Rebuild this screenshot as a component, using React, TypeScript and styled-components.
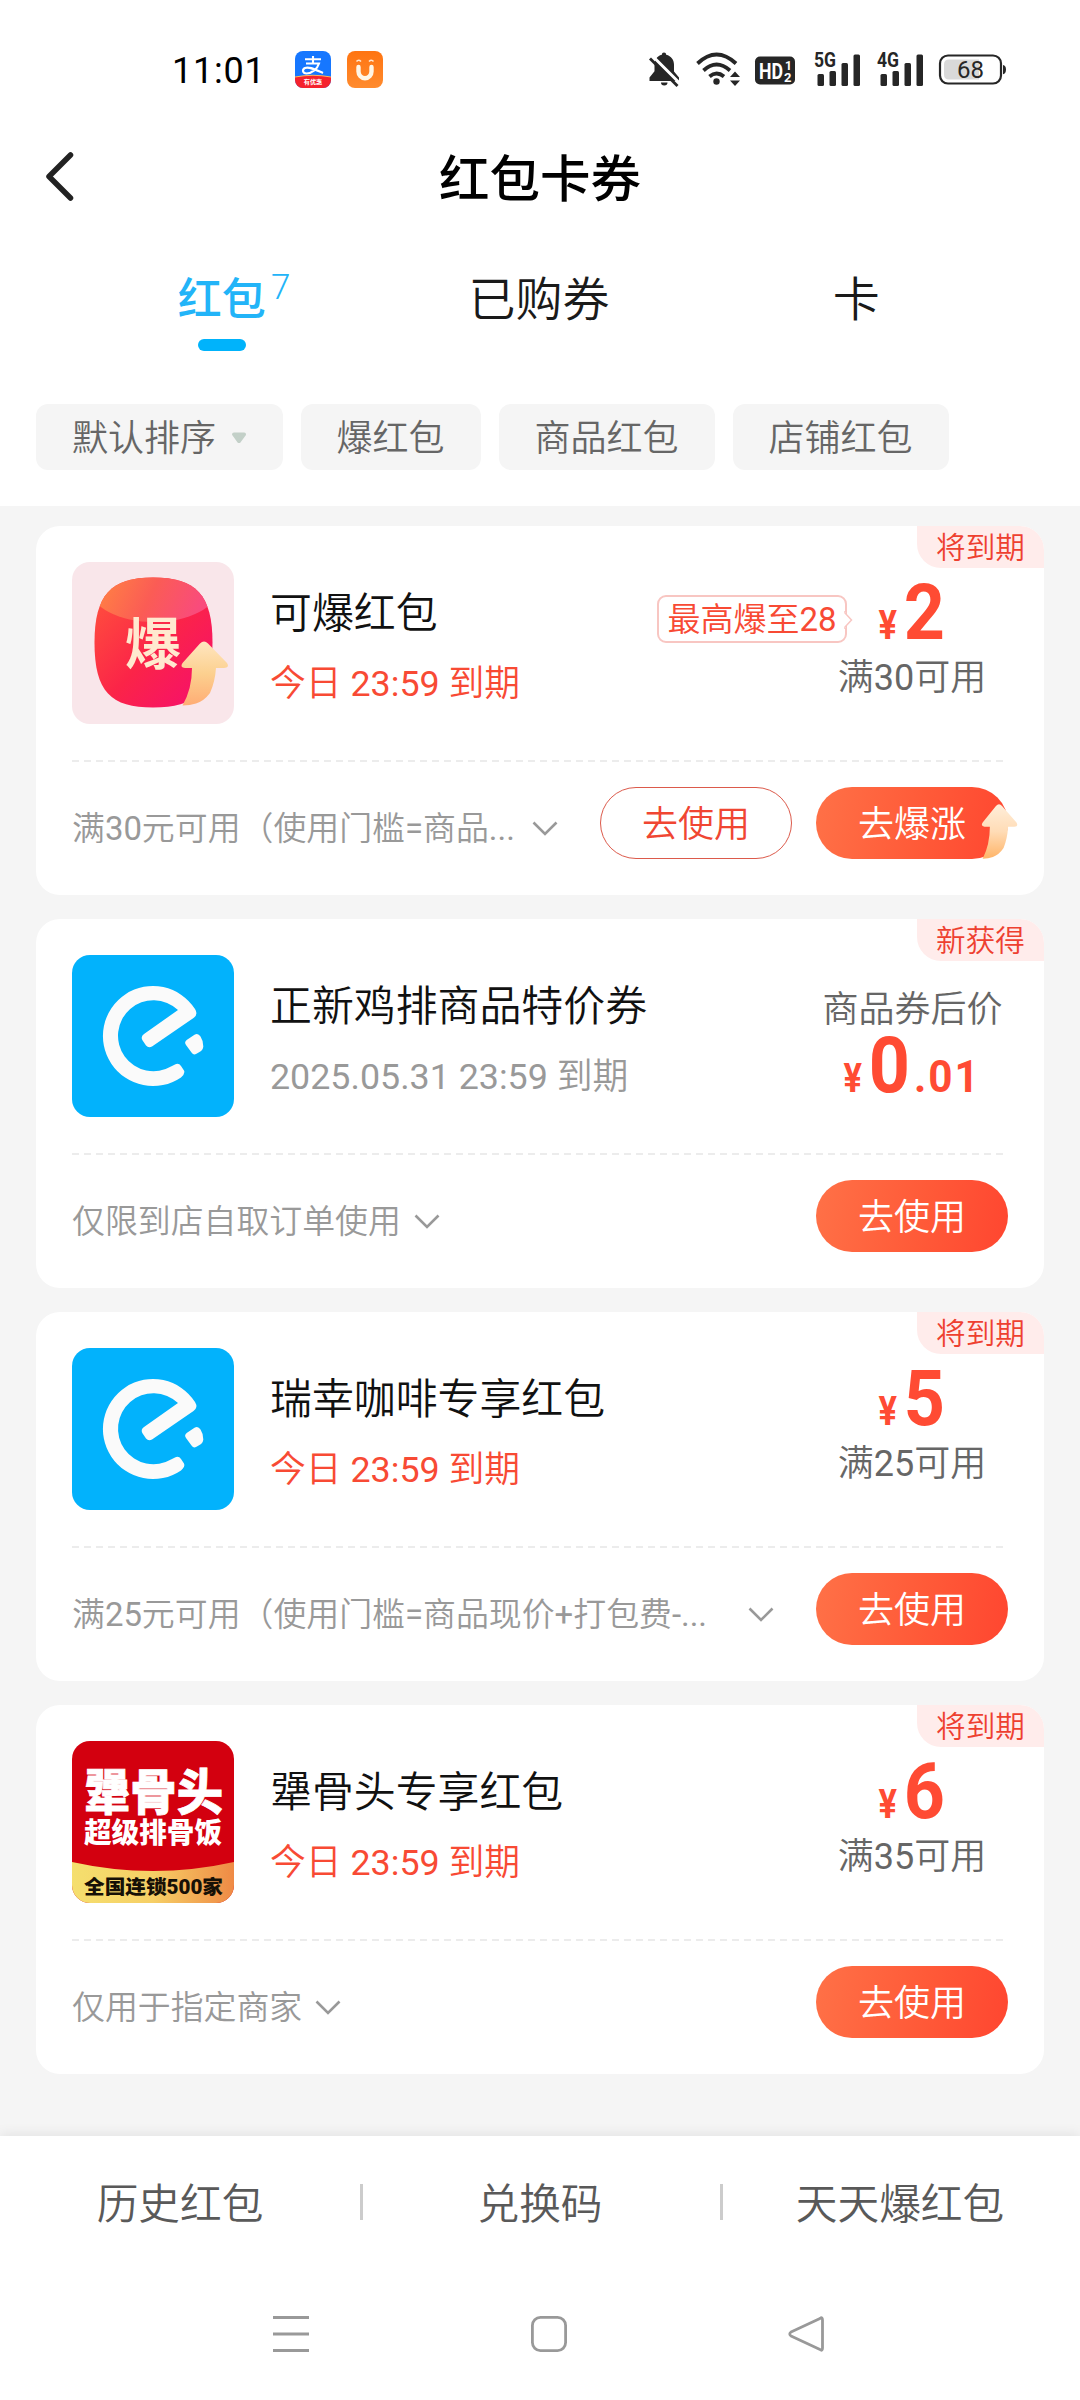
import React from "react";
import styled, { createGlobalStyle, css } from "styled-components";

const sans = `Roboto, "Noto Sans CJK SC DemiLight", "Noto Sans CJK SC", "Noto Sans", sans-serif`;
const sansStrong = `Roboto, "Noto Sans CJK SC", "Noto Sans", sans-serif`;
const red = "#f84a34";

const GlobalStyle = createGlobalStyle`
  * { box-sizing: border-box; }
  body { margin: 0; background: #f5f5f5; font-family: ${sans}; font-weight: 400; -webkit-font-smoothing: antialiased; }
  button { font: inherit; border: 0; background: none; padding: 0; margin: 0; }
`;

const Screen = styled.div`
  width: 1080px;
  height: 2400px;
  display: flex;
  flex-direction: column;
  overflow: hidden;
  background: #f5f5f5;
`;

const Top = styled.header`
  height: 506px;
  flex: none;
  background: #fff;
`;

const StatusBar = styled.div`
  height: 138px;
  padding: 0 72px 0 172px;
  display: flex;
  align-items: center;
  justify-content: space-between;
`;

const StatusGroup = styled.div`
  display: flex;
  align-items: center;
`;

const Clock = styled.span`
  font-size: 36px;
  font-weight: 400;
  letter-spacing: 0.8px;
  line-height: 44px;
  width: 123px;
  color: #000;
  padding-top: 3px;
`;

const AppIcons = styled.div`
  display: flex;
  gap: 16px;
`;

const TitleBar = styled.div`
  height: 80px;
  display: grid;
  grid-template-columns: 120px 1fr 120px;
  align-items: center;
`;

const BackButton = styled.button`
  display: flex;
  padding-left: 44px;
`;

const PageTitle = styled.h1`
  margin: 0;
  padding-top: 2px;
  text-align: center;
  font-family: ${sansStrong};
  font-size: 50.5px;
  line-height: 80px;
  font-weight: 500;
  color: #000;
`;

const Tabs = styled.nav`
  height: 186px;
  padding: 0 65px 0 63px;
  display: grid;
  grid-template-columns: repeat(3, 1fr);
`;

const Tab = styled.button<{ $active?: boolean }>`
  display: flex;
  flex-direction: column;
  align-items: center;
  padding-top: 51px;
  font-family: ${(p) => (p.$active ? sansStrong : sans)};
  font-size: ${(p) => (p.$active ? 44 : 47)}px;
  line-height: 62px;
  font-weight: ${(p) => (p.$active ? 500 : 400)};
  color: ${(p) => (p.$active ? "#22b4f8" : "#1a1a1a")};
`;

const TabLabel = styled.span`
  display: flex;
`;

const TabCount = styled.span`
  font-size: 35px;
  line-height: 37px;
  font-weight: 300;
  width: 26px;
  padding-left: 4px;
  margin-right: -26px;
`;

const TabMark = styled.span`
  width: 48px;
  height: 12px;
  border-radius: 6px;
  margin-top: 8px;
  background: #00b3fb;
`;

const Filters = styled.div`
  display: flex;
  gap: 18px;
  padding-left: 36px;
`;

const Chip = styled.button`
  display: flex;
  align-items: center;
  gap: 14.5px;
  height: 66px;
  padding: 5px 36px 0;
  border-radius: 12px;
  background: #f5f5f5;
  color: #666;
  font-size: 36px;
  line-height: 61px;
`;

const ChipCaret = styled.svg`
  margin-top: -4px;
`;

const List = styled.main`
  flex: 1;
  display: flex;
  flex-direction: column;
  gap: 24px;
  padding: 20px 36px 0;
`;

const Card = styled.article`
  position: relative;
  height: 369px;
  flex: none;
  padding: 36px;
  border-radius: 24px;
  background: #fff;
`;

const Badge = styled.span`
  position: absolute;
  top: 0;
  right: 0;
  width: 127px;
  height: 42px;
  padding-top: 1px;
  border-radius: 0 24px 0 24px;
  background: #ffeceb;
  color: #ee4030;
  font-size: 29.6px;
  line-height: 43px;
  text-align: center;
`;

const Summary = styled.div`
  display: flex;
  height: 162px;
`;

const Info = styled.div`
  flex: 1;
  padding: 22px 0 0 36px;
`;

const CouponName = styled.h2`
  margin: 0 0 16px;
  font-size: 41.9px;
  line-height: 60px;
  font-weight: 400;
  color: #111;
`;

const Expiry = styled.p<{ $urgent?: boolean }>`
  margin: 0;
  font-size: 35.8px;
  line-height: 48px;
  color: ${(p) => (p.$urgent ? red : "#999")};
`;

const Value = styled.div<{ $labelFirst?: boolean }>`
  width: 192px;
  display: flex;
  flex-direction: column;
  align-items: center;
  padding-top: ${(p) => (p.$labelFirst ? 31 : 12)}px;
`;

const Price = styled.div<{ $pull?: boolean }>`
  display: flex;
  align-items: baseline;
  height: 78px;
  line-height: 78px;
  margin-top: ${(p) => (p.$pull ? -7 : 0)}px;
  color: #ff4b33;
  font-weight: 700;
`;

const Currency = styled.span`
  font-size: 40px;
  transform: scaleX(0.86);
`;

const Amount = styled.span`
  font-size: 78px;
  margin-left: 4px;
  transform: scaleX(0.92);
`;

const Cents = styled.span`
  font-size: 45px;
  letter-spacing: 2px;
  transform: scaleX(0.94);
`;

const Terms = styled.span`
  font-size: 36px;
  line-height: 48px;
  margin-top: 2px;
  color: #666;
  white-space: nowrap;
`;

const PlainTerms = styled(Terms)`
  margin: 0 0 0 1px;
`;

const Boost = styled.span`
  position: relative;
  width: 190px;
  height: 48px;
  margin: 33px -38px 0 0;
  left: -7px;
  border: 2px solid #f8c6c2;
  border-radius: 9px;
  color: ${red};
  font-size: 33px;
  line-height: 46px;
  text-align: center;
  white-space: nowrap;
`;

const BoostTip = styled.svg`
  position: absolute;
  right: -8px;
  top: 14px;
`;

const Divider = styled.div`
  height: 2px;
  width: 931px;
  margin: 36px 0 25px;
  background: repeating-linear-gradient(90deg, #ececec 0 7px, transparent 7px 12px);
`;

const Footer = styled.div`
  display: flex;
  align-items: center;
  height: 72px;
`;

const Note = styled.button`
  flex: 1;
  display: flex;
  align-items: center;
  gap: 13px;
  padding-top: 12px;
  color: #999;
  font-size: 32.9px;
  line-height: 48px;
  white-space: nowrap;
`;

const NoteText = styled.span<{ $width?: number }>`
  ${(p) => p.$width && css`width: ${p.$width}px; text-align: left;`}
`;

const Actions = styled.div`
  display: flex;
  gap: 24px;
`;

const Action = styled.button<{ $outline?: boolean }>`
  position: relative;
  display: flex;
  justify-content: center;
  width: 192px;
  height: 72px;
  border-radius: 36px;
  font-size: 36px;
  line-height: 72px;
  padding-top: 2px;
  white-space: nowrap;
  ${(p) =>
    p.$outline
      ? css`
          border: 1.5px solid #dc5a4b;
          color: #f04632;
          line-height: 70px;
        `
      : css`
          background: linear-gradient(100deg, #ff7147 0%, #ff5a38 55%, #ff4630 100%);
          color: #fff;
        `}
`;

const ActionArrow = styled.svg`
  position: absolute;
  left: 164px;
  top: 16px;
`;

const BottomBar = styled.footer`
  height: 264px;
  flex: none;
  background: #fff;
  box-shadow: 0 -2px 12px rgba(0, 0, 0, 0.08);
`;

const Links = styled.div`
  display: grid;
  grid-template-columns: repeat(3, 1fr);
  padding-top: 36px;
`;

const LinkItem = styled.button`
  height: 60px;
  padding-top: 6px;
  font-size: 41.7px;
  line-height: 60px;
  color: #595959;
  display: flex;
  align-items: center;
  justify-content: center;
`;

const LinkCell = styled.div`
  display: grid;
  grid-template-columns: 1fr 3px;
  align-items: center;
  margin-right: -3px;
`;

const Separator = styled.i`
  width: 3px;
  height: 36px;
  background: #ccc;
`;

const NavKeys = styled.div`
  display: flex;
  justify-content: space-between;
  align-items: center;
  padding: 82px 255px 0 272px;
`;

const Alipay = () => (
  <svg width="36" height="37" viewBox="0 0 36 37">
    <defs>
      <clipPath id="ali"><rect width="36" height="37" rx="8" /></clipPath>
    </defs>
    <g clipPath="url(#ali)">
      <rect width="36" height="37" fill="#1677ff" />
      <path d="M0 26 Q18 22.5 36 26 V37 H0Z" fill="#f5222d" />
      <path d="M0 26 Q18 22.5 36 26" fill="none" stroke="#ffb35c" strokeWidth="1.2" />
      <g fill="none" stroke="#fff" strokeWidth="2.1">
        <path d="M10 8.3H26M18 5V12.3M11 12.5H24C22.5 17.5 17 22.5 11.5 22.5C7.5 22.5 6.8 18.5 10 17C14 15.2 20 18.5 28 22" />
      </g>
      <text x="18" y="33.3" textAnchor="middle" fontSize="6.2" fontWeight="700" fill="#fff" fontFamily={sansStrong}>有优惠</text>
    </g>
  </svg>
);

const OrangeU = () => (
  <svg width="36" height="37" viewBox="0 0 36 37">
    <defs>
      <linearGradient id="ou" x1="0" y1="0" x2="0" y2="1">
        <stop offset="0" stopColor="#ff7411" /><stop offset="1" stopColor="#ff8b2e" />
      </linearGradient>
    </defs>
    <rect width="36" height="37" rx="8" fill="url(#ou)" />
    <path d="M11.5 16V20.5A6.2 6.5 0 0 0 24.5 20.5V16" fill="none" stroke="#fff6e6" strokeWidth="4.4" strokeLinecap="round" />
    <path d="M9.5 10.5Q11.5 8 14 10.5M22 10.5Q24.5 8 26.5 10.5" fill="none" stroke="#ffe7cf" strokeWidth="1.6" />
  </svg>
);

const StatusIcons = () => (
  <svg width="360" height="50" viewBox="648 44 360 50" fill="#262626">
    <path d="M664 52.5a2.2 2.2 0 0 0-2.2 2.2c-5 1.2-7.3 5.3-7.3 10v6.5L649.5 77.5V81H679V77.5L674 71.5V64.7c0-4.7-2.7-8.8-7.8-10a2.2 2.2 0 0 0-2.2-2.2z" />
    <path d="M661 82.5h6.500a3.200 3 0 0 1-6.500 0z" />
    <path d="M651 54.500L681 84.500" stroke="#fff" strokeWidth="3" />
    <path d="M650 58.500L677.500 86" stroke="#262626" strokeWidth="2.8" />
    <g fill="none" stroke="#262626" strokeWidth="3.8">
      <path d="M697.500 63.500Q716.500 45.500 736 63.500" />
      <path d="M703.500 70.500Q716.500 58.500 730 70.500" />
      <path d="M709.500 76.500Q716.500 70.500 724 76.500" />
    </g>
    <circle cx="716.500" cy="81.500" r="3.200" />
    <path d="M730 77L735 71.500L740 77ZM730 80.500L735 86L740 80.500Z" />
    <rect x="755" y="56.500" width="40" height="28" rx="5" />
    <text x="759" y="78.500" fontSize="22" fontWeight="700" fill="#fff" textLength="24" lengthAdjust="spacingAndGlyphs" fontFamily={sans}>HD</text>
    <text x="785" y="69.500" fontSize="12" fontWeight="700" fill="#fff" fontFamily={sans}>1</text>
    <text x="784" y="81.500" fontSize="13" fontWeight="700" fill="#fff" fontFamily={sans}>2</text>
    <text x="814" y="67" fontSize="20" fontWeight="700" textLength="22" lengthAdjust="spacingAndGlyphs" fontFamily={sans}>5G</text>
    <text x="877" y="67" fontSize="20" fontWeight="700" textLength="22" lengthAdjust="spacingAndGlyphs" fontFamily={sans}>4G</text>
    {[817.5, 880.5].map((x) => (
      <g key={x}>
        <rect x={x} y="74" width="6.5" height="12" rx="1.5" />
        <rect x={x + 12} y="71" width="6.5" height="15" rx="1.5" />
        <rect x={x + 24} y="63" width="6.5" height="23" rx="1.5" />
        <rect x={x + 36} y="54.5" width="6.5" height="31.5" rx="1.5" />
      </g>
    ))}
    <rect x="940" y="55.5" width="61" height="28" rx="8" fill="#fff" stroke="#262626" strokeWidth="2.2" />
    <path d="M949 59.5H979V79.5H949Q944 79.500 944 74.500V64.500Q944 59.500 949 59.500Z" fill="#d9d9d9" />
    <path d="M1003 65Q1006 65.500 1006 69.500T1003 74.300Z" />
    <text x="970.5" y="78" textAnchor="middle" fontSize="24" fontWeight="400" fontFamily={sans}>68</text>
  </svg>
);

const Chevron = () => (
  <svg width="26" height="16" viewBox="0 0 26 16" fill="none" stroke="#999" strokeWidth="2.6">
    <path d="M1.5 1.5L13 13L24.5 1.5" />
  </svg>
);

const ArrowShape = ({ id, pale }: { id: string; pale?: boolean }) => (
  <>
    <defs>
      <linearGradient id={id} x1="0" y1="0" x2="0" y2="1">
        <stop offset="0" stopColor={pale ? "#ffeeda" : "#ffe6c0"} />
        <stop offset="0.5" stopColor={pale ? "#ffdcb6" : "#fcd08f"} />
        <stop offset="1" stopColor={pale ? "#ffb468" : "#ffac74"} />
      </linearGradient>
    </defs>
    <path
      fill={`url(#${id})`}
      d="M128 81.5Q132 77.5 136 81.5L155 101Q158 105.5 152 106H144Q143 120 138 131Q132 139 124 141.5Q118 143.5 110.5 143.5Q120 127 120 106H113Q107.5 105.5 110.5 101Z"
    />
  </>
);

const BoomLogo = () => (
  <svg width="162" height="162" viewBox="0 0 162 162">
    <defs>
      <linearGradient id="boomBody" x1="0" y1="0.3" x2="0.8" y2="1">
        <stop offset="0" stopColor="#ff543c" /><stop offset="0.5" stopColor="#fb2448" /><stop offset="1" stopColor="#f50c72" />
      </linearGradient>
      <linearGradient id="boomTop" x1="0.1" y1="0.4" x2="0.9" y2="0.6">
        <stop offset="0" stopColor="#ff8044" /><stop offset="0.5" stopColor="#fb5c55" /><stop offset="1" stopColor="#f94b7c" />
      </linearGradient>
      <clipPath id="boomClip">
        <path d="M81 15.5C124 15.5 140.5 33 140.5 80.5C140.5 130 124 145.5 81 145.5C39 145.5 22.5 130 22.5 80.5C22.5 33 39 15.5 81 15.5Z" />
      </clipPath>
    </defs>
    <rect width="162" height="162" rx="18" fill="#f9e6ea" />
    <g clipPath="url(#boomClip)">
      <rect width="162" height="162" fill="url(#boomBody)" />
      <ellipse cx="82" cy="26" rx="64" ry="34" fill="url(#boomTop)" />
    </g>
    <text x="81" y="102" textAnchor="middle" fontSize="56" fontWeight="700" fill="#ffe9cf" fontFamily={sansStrong}>爆</text>
    <ArrowShape id="boomArrow" />
  </svg>
);

const ElemeLogo = () => (
  <svg width="162" height="162" viewBox="0 0 162 162">
    <rect width="162" height="162" rx="18" fill="#02b2fc" />
    <g fill="#fafafa">
      <path d="M123 54Q126.5 59.5 121.5 63L80 91.5Q76.5 93.5 74 90.5L70.3 85Q68.5 81.5 72 79L106 55A35.5 35.5 0 1 0 99.5 111.3L103.5 109.2Q107 108 109 111L112 115.5Q113.5 118.5 109 122.4A50 50 0 1 1 123 54Z" />
      <path d="M122.5 79.8Q126 77.5 128.5 81.5Q131.5 86 131.3 91.5Q131 95 127.5 97L124 99Q121.5 100.3 119.5 97.5L114 90Q111.8 87 115 84.8Z" />
    </g>
  </svg>
);

const RibLogo = () => (
  <svg width="162" height="162" viewBox="0 0 162 162">
    <defs>
      <clipPath id="ribClip"><rect width="162" height="162" rx="18" /></clipPath>
      <linearGradient id="ribGold">
        <stop offset="0" stopColor="#f5df6e" /><stop offset="0.5" stopColor="#f6cf66" /><stop offset="1" stopColor="#ef8a45" />
      </linearGradient>
    </defs>
    <g clipPath="url(#ribClip)">
      <rect width="162" height="162" fill="#d3000f" />
      <path d="M0 121Q81 139 162 121V162H0Z" fill="url(#ribGold)" />
    </g>
    <g fontFamily={sansStrong} fontWeight="900">
      <text x="12" y="69" fontSize="49" textLength="139" lengthAdjust="spacingAndGlyphs" fill="#fff" stroke="#fff" strokeWidth="0.8">犟骨头</text>
      <text x="12" y="102" fontSize="28" textLength="138" lengthAdjust="spacingAndGlyphs" fill="#fff">超级排骨饭</text>
      <text x="12" y="152.5" fontSize="19.5" textLength="139" lengthAdjust="spacingAndGlyphs" fill="#161006">全国连锁500家</text>
    </g>
  </svg>
);

type Coupon = {
  logo: React.ReactNode;
  badge: string;
  name: string;
  expiry: string;
  urgent?: boolean;
  boost?: string;
  amount: string;
  cents?: string;
  terms: string;
  labelFirst?: boolean;
  note: string;
  noteWidth?: number;
  canBoost?: boolean;
};

const coupons: Coupon[] = [
  { logo: <BoomLogo />, badge: "将到期", name: "可爆红包", expiry: "今日 23:59 到期", urgent: true, boost: "最高爆至28", amount: "2", terms: "满30可用", note: "满30元可用（使用门槛=商品...", noteWidth: 447, canBoost: true },
  { logo: <ElemeLogo />, badge: "新获得", name: "正新鸡排商品特价券", expiry: "2025.05.31 23:59 到期", amount: "0", cents: ".01", terms: "商品券后价", labelFirst: true, note: "仅限到店自取订单使用" },
  { logo: <ElemeLogo />, badge: "将到期", name: "瑞幸咖啡专享红包", expiry: "今日 23:59 到期", urgent: true, amount: "5", terms: "满25可用", note: "满25元可用（使用门槛=商品现价+打包费-...", noteWidth: 663 },
  { logo: <RibLogo />, badge: "将到期", name: "犟骨头专享红包", expiry: "今日 23:59 到期", urgent: true, amount: "6", terms: "满35可用", note: "仅用于指定商家" },
];

const CouponCard = ({ c }: { c: Coupon }) => {
  const price = (
    <Price $pull={c.labelFirst}>
      <Currency>¥</Currency>
      <Amount>{c.amount}</Amount>
      {c.cents && <Cents>{c.cents}</Cents>}
    </Price>
  );
  return (
    <Card>
      <Badge>{c.badge}</Badge>
      <Summary>
        {c.logo}
        <Info>
          <CouponName>{c.name}</CouponName>
          <Expiry $urgent={c.urgent}>{c.expiry}</Expiry>
        </Info>
        {c.boost && (
          <Boost>
            {c.boost}
            <BoostTip width="9" height="18" viewBox="0 0 9 18">
              <path d="M0 1H2V17H0Z" fill="#fff" />
              <path d="M1 0V2L7.5 9L1 16V18" fill="#fff" stroke="#f8c6c2" strokeWidth="1.5" />
            </BoostTip>
          </Boost>
        )}
        <Value $labelFirst={c.labelFirst}>
          {c.labelFirst ? (
            <>
              <PlainTerms>{c.terms}</PlainTerms>
              {price}
            </>
          ) : (
            <>
              {price}
              <Terms>{c.terms}</Terms>
            </>
          )}
        </Value>
      </Summary>
      <Divider />
      <Footer>
        <Note>
          <NoteText $width={c.noteWidth}>{c.note}</NoteText>
          <Chevron />
        </Note>
        <Actions>
          {c.canBoost && <Action $outline>去使用</Action>}
          <Action>
            {c.canBoost ? "去爆涨" : "去使用"}
            {c.canBoost && (
              <ActionArrow width="38" height="57" viewBox="107 78 50 67" preserveAspectRatio="none">
                <ArrowShape id="actionArrow" pale />
              </ActionArrow>
            )}
          </Action>
        </Actions>
      </Footer>
    </Card>
  );
};

export default function App() {
  return (
    <>
      <GlobalStyle />
      <Screen>
        <Top>
          <StatusBar>
            <StatusGroup>
              <Clock>11:01</Clock>
              <AppIcons>
                <Alipay />
                <OrangeU />
              </AppIcons>
            </StatusGroup>
            <StatusIcons />
          </StatusBar>
          <TitleBar>
            <BackButton>
              <svg width="32" height="54" viewBox="0 0 32 54" fill="none" stroke="#222" strokeWidth="5.5" strokeLinecap="round" strokeLinejoin="round">
                <path d="M26.5 3L5 24.5L26.5 46" />
              </svg>
            </BackButton>
            <PageTitle>红包卡券</PageTitle>
          </TitleBar>
          <Tabs>
            <Tab $active>
              <TabLabel>
                红包<TabCount>7</TabCount>
              </TabLabel>
              <TabMark />
            </Tab>
            <Tab>已购券</Tab>
            <Tab>卡</Tab>
          </Tabs>
          <Filters>
            <Chip>
              默认排序
              <ChipCaret width="16" height="12" viewBox="0 0 16 12">
                <path d="M2 2.5Q2 1.5 3 1.5H13Q14.5 1.5 13.8 3L9 9.5Q8 10.5 7 9.5Z" fill="#c3d0c8" stroke="#c3d0c8" strokeWidth="2" strokeLinejoin="round" />
              </ChipCaret>
            </Chip>
            <Chip>爆红包</Chip>
            <Chip>商品红包</Chip>
            <Chip>店铺红包</Chip>
          </Filters>
        </Top>
        <List>
          {coupons.map((c) => (
            <CouponCard key={c.name} c={c} />
          ))}
        </List>
        <BottomBar>
          <Links>
            <LinkCell><LinkItem>历史红包</LinkItem><Separator /></LinkCell>
            <LinkCell><LinkItem>兑换码</LinkItem><Separator /></LinkCell>
            <LinkItem>天天爆红包</LinkItem>
          </Links>
          <NavKeys>
            <svg width="38" height="40" viewBox="0 0 38 40" stroke="#999" strokeWidth="3">
              <path d="M1 3.5H37M1 20H37M1 36.5H37" />
            </svg>
            <svg width="38" height="40" viewBox="0 0 38 40" fill="none" stroke="#999" strokeWidth="2.8">
              <rect x="2.4" y="3.4" width="33.2" height="33.2" rx="8" />
            </svg>
            <svg width="38" height="40" viewBox="0 0 38 40" fill="none" stroke="#999" strokeWidth="2.8" strokeLinejoin="round">
              <path d="M33 4.5Q35.5 2.5 35.5 6V34Q35.5 37.5 33 35.5L4 22Q1.5 20 4 18Z" />
            </svg>
          </NavKeys>
        </BottomBar>
      </Screen>
    </>
  );
}
